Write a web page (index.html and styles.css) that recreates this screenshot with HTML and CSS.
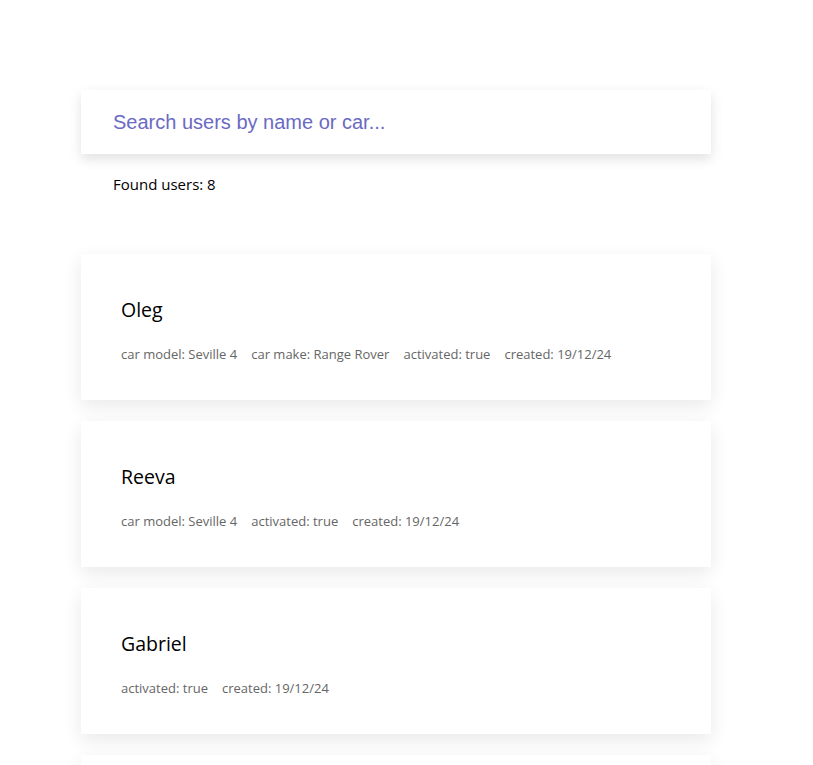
FILE: index.html
```html
<!DOCTYPE html>
<html lang="en">
<head>
<meta charset="utf-8">
<title>Users</title>
<link rel="stylesheet" href="styles.css">
</head>
<body>
<main class="page">
  <div class="search">
    <input class="search-input" type="text" placeholder="Search users by name or car...">
  </div>
  <p class="found">Found users: 8</p>
  <ul class="users">
    <li class="card">
      <h2 class="name">Oleg</h2>
      <div class="meta"><span>car model: Seville 4</span><span>car make: Range Rover</span><span>activated: true</span><span>created: 19/12/24</span></div>
    </li>
    <li class="card">
      <h2 class="name">Reeva</h2>
      <div class="meta"><span>car model: Seville 4</span><span>activated: true</span><span>created: 19/12/24</span></div>
    </li>
    <li class="card">
      <h2 class="name">Gabriel</h2>
      <div class="meta"><span>activated: true</span><span>created: 19/12/24</span></div>
    </li>
    <li class="card">
      <h2 class="name">Anna</h2>
      <div class="meta"><span>activated: true</span><span>created: 19/12/24</span></div>
    </li>
  </ul>
</main>
</body>
</html>
```
FILE: styles.css
```css
html, body {
  margin: 0;
  padding: 0;
  background: #ffffff;
}
body {
  font-family: "Open Sans", "Noto Sans", sans-serif;
  color: #000;
}
.page {
  width: 630px;
  padding: 90px 0 0 81px;
}
.search {
  background: #fff;
  box-shadow: 0 5px 12px rgba(0, 0, 0, 0.12);
}
.search-input {
  display: block;
  width: 100%;
  box-sizing: border-box;
  height: 64px;
  border: none;
  outline: none;
  background: transparent;
  padding: 0 32px;
  font-family: "Liberation Sans", Arial, sans-serif;
  font-size: 20px;
}
.search-input::placeholder {
  color: #6a6ac4;
  opacity: 1;
}
.found {
  margin: 20px 0 0 32px;
  font-size: 15px;
  line-height: 20px;
}
.users {
  list-style: none;
  margin: 60px 0 0;
  padding: 0;
  display: flex;
  flex-direction: column;
  gap: 21px;
}
.card {
  background: #fff;
  height: 146px;
  box-sizing: border-box;
  padding: 43px 40px 0;
  box-shadow: 0 6px 18px rgba(0, 0, 0, 0.09);
}
.name {
  margin: 0;
  font-weight: 400;
  font-size: 19.5px;
  line-height: 26px;
}
.meta {
  margin-top: 22px;
  display: flex;
  gap: 14px;
  font-size: 13px;
  line-height: 18px;
  color: #666;
}
```
